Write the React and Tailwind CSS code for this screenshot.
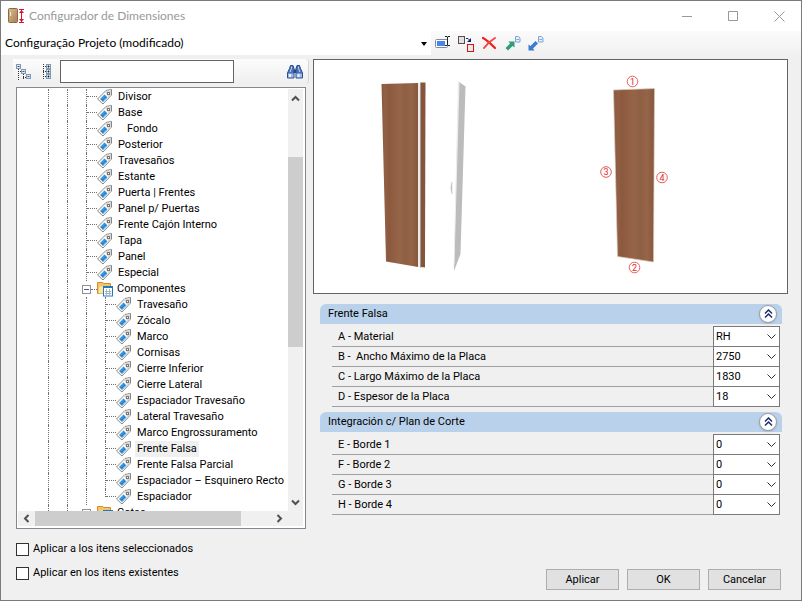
import React from "react";

const pieces = [
  "Divisor",
  "Base",
  "Fondo",
  "Posterior",
  "Travesaños",
  "Estante",
  "Puerta | Frentes",
  "Panel p/ Puertas",
  "Frente Cajón Interno",
  "Tapa",
  "Panel",
  "Especial",
];

const components = [
  "Travesaño",
  "Zócalo",
  "Marco",
  "Cornisas",
  "Cierre Inferior",
  "Cierre Lateral",
  "Espaciador Travesaño",
  "Lateral Travesaño",
  "Marco Engrossuramento",
  "Frente Falsa",
  "Frente Falsa Parcial",
  "Espaciador – Esquinero Recto",
  "Espaciador",
];

const groups = [
  {
    title: "Frente Falsa",
    fields: [
      { id: "a", label: "A - Material", value: "RH" },
      { id: "b", label: "B -  Ancho Máximo de la Placa", value: "2750" },
      { id: "c", label: "C - Largo Máximo de la Placa", value: "1830" },
      { id: "d", label: "D - Espesor de la Placa", value: "18" },
    ],
  },
  {
    title: "Integración c/ Plan de Corte",
    fields: [
      { id: "e", label: "E - Borde 1", value: "0" },
      { id: "f", label: "F - Borde 2", value: "0" },
      { id: "g", label: "G - Borde 3", value: "0" },
      { id: "h", label: "H - Borde 4", value: "0" },
    ],
  },
];

/* ICONS */

function AppIcon() {
  return (
    <svg width="17" height="16" viewBox="0 0 17 16" className="shrink-0">
      <defs>
        <linearGradient id="door" x1="0" y1="0" x2="1" y2="1">
          <stop offset="0" stopColor="#d9bd92" />
          <stop offset="1" stopColor="#a77f52" />
        </linearGradient>
      </defs>
      <rect x="0.5" y="0.5" width="9" height="14" rx="1" fill="url(#door)" stroke="#8a6a45" />
      <path d="M2.500 4v4" stroke="#f6ead4" />
      <path d="M11 1.500h5M11 14.500h5M13.500 2v12" stroke="#d8142c" fill="none" />
      <path d="M11 5l2.500-3L16 5zM11 11l2.500 3 2.500-3z" fill="#d8142c" />
    </svg>
  );
}

function TagIcon() {
  return (
    <svg width="16" height="16" viewBox="0 0 16 16" className="shrink-0">
      <path d="M.5 10 9 1.500 14.500.500V6L6 15z" fill="#fff" stroke="#858585" strokeLinejoin="round" />
      <path d="M8 3 9.500 2l4.500-1v5l-2.500 2.500z" fill="#dadada" />
      <path d="M3 10 7.500 5.500 10.500 8.500 6 13z" fill="#2486d2" />
      <path d="M4.500 10 8 6.500M6.500 11.500 9.500 8.500" stroke="#6db8ee" strokeWidth="0.8" />
      <rect x="10.500" y="3.500" width="2" height="2" fill="#fff" stroke="#777" />
    </svg>
  );
}

function FolderIcon() {
  return (
    <svg width="16" height="16" viewBox="0 0 16 16" className="shrink-0">
      <path d="M.5 12.500V1.500h5l1.500 1h6.500v10z" fill="#f3c366" stroke="#cf8f2c" />
      <path d="M2.500 5.500h11v2h-6v5h-6z" fill="#fde7a8" />
      <rect x="6.500" y="5.500" width="9" height="9.500" fill="#fff" stroke="#2478c0" />
      <path d="M6 6.500h10" stroke="#2478c0" />
      <path d="M9.500 8v6M12.500 8v6M8 10.500h6.500M8 12.500h6.500" stroke="#9cb6cc" />
    </svg>
  );
}

function BoxMark({ x, y, plus }) {
  return (
    <g>
      <rect x={x} y={y} width="4" height="4" fill="#dfe9f3" stroke="#8199b0" />
      <path d={`M${x + 1} ${y + 2}h2`} stroke="#2d5680" />
      {plus && <path d={`M${x + 2} ${y + 1}v2`} stroke="#222" />}
    </g>
  );
}

function CollapseIcon() {
  return (
    <svg width="16" height="16" viewBox="0 0 16 16">
      <path d="M2.500 5v11M2 7.500h4M7.500 10v6M7 13.500h4" stroke="#333" strokeDasharray="1 1" />
      <BoxMark x={0.5} y={0.5} />
      <BoxMark x={5.5} y={5.5} />
      <BoxMark x={10.5} y={10.5} />
    </svg>
  );
}

function ExpandIcon() {
  return (
    <svg width="16" height="16" viewBox="0 0 16 16">
      <path d="M4.500 0v16M4 2.500h4M4 7.500h4M4 12.500h4" stroke="#333" strokeDasharray="1 1" />
      <BoxMark x={7.5} y={0.5} plus />
      <BoxMark x={7.5} y={5.5} plus />
      <BoxMark x={7.5} y={10.5} plus />
    </svg>
  );
}

function BinocularsIcon() {
  return (
    <svg width="16" height="14" viewBox="0 0 16 14">
      <path
        d="M3.500.500h2.500l1 3v9.500H.500V8L2.500 3.500zM12.500.500H10l-1 3v9.500h6.500V8L13.500 3.500z"
        fill="#4a72b8"
        stroke="#2a4c8c"
      />
      <path d="M7 4.500h2V8H7z" fill="#24457f" />
      <path d="M1 8.500h5.500v4H1zM9.500 8.500H15v4H9.500z" fill="#9db9e6" />
      <path d="M2 9h2v3H2zM10.500 9h2v3h-2z" fill="#eaf2ff" />
      <path d="M4.500 1.500v2L3 7M11.500 1.500v2L13 7" stroke="#c6d7f3" fill="none" />
    </svg>
  );
}

function RenameIcon() {
  return (
    <svg width="16" height="16" viewBox="0 0 16 16">
      <rect x="0.5" y="4.500" width="12" height="8" rx="1" fill="#fff" stroke="#7d8ba0" />
      <rect x="2" y="6" width="8" height="5" fill="#4a86e8" />
      <path d="M10 1.500h2l.5.500.5-.500h2M12.500 2v8M10 10.500h2l.5-.500.5.500h2" stroke="#222" fill="none" />
    </svg>
  );
}

function ReplaceIcon() {
  return (
    <svg width="17" height="16" viewBox="0 0 17 16">
      <rect x="0.5" y="0.5" width="6" height="7" fill="#e2e2e2" stroke="#5d4a4a" />
      <path d="M8 2.500h2l2 2" stroke="#12296b" fill="none" />
      <path d="M13 2v4H9z" fill="#12296b" />
      <rect x="9.500" y="8.500" width="6" height="7" fill="#e8e8e8" stroke="#d01515" />
    </svg>
  );
}

function DeleteIcon() {
  return (
    <svg width="15" height="14" viewBox="0 0 15 14">
      <path d="M1 2C5 4 9 8 13 12" fill="none" stroke="#f21d1d" strokeWidth="2.200" strokeLinecap="round" />
      <path d="M13 2C8 5 5 8 2 12" fill="none" stroke="#f54545" strokeWidth="2" strokeLinecap="round" />
    </svg>
  );
}

function PageMark() {
  return (
    <g>
      <path d="M10.500.500h3l1.500 1.500v4h-4.500z" fill="#e6effa" stroke="#7fa5d6" />
      <path d="M11.500 3.500h2.500" stroke="#7fa5d6" />
    </g>
  );
}

function ExportIcon() {
  return (
    <svg width="16" height="15" viewBox="0 0 16 15">
      <PageMark />
      <path d="M3.500 5.500h6v6L7.500 10l-4.500 4.500L.500 12 5 7.500z" fill="#2f9e78" />
    </svg>
  );
}

function ImportIcon() {
  return (
    <svg width="16" height="15" viewBox="0 0 16 15">
      <PageMark />
      <path d="M.500 14.500v-6l2 1.500 5-5L10 7.500l-5 5 1.500 2z" fill="#3c7bd0" />
    </svg>
  );
}

function Chevron({ d, className }) {
  return (
    <svg width="9" height="9" viewBox="0 0 9 9" className={className}>
      <path d={d} fill="none" stroke="currentColor" />
    </svg>
  );
}

/* TREE */

function Guides() {
  return (
    <>
      <span className="h-full w-[19px] shrink-0 border-l border-dotted border-[#707070]" />
      <span className="h-full w-[19px] shrink-0 border-l border-dotted border-[#707070]" />
    </>
  );
}

function Branch({ last }) {
  return (
    <span
      className={`w-[11px] shrink-0 self-start border-l border-dotted border-[#707070] ${
        last ? "h-2" : "h-full"
      }`}
    >
      <span className="block h-2 border-b border-dotted border-[#707070]" />
    </span>
  );
}

function FolderRow({ label }) {
  return (
    <li className="flex h-4 shrink-0 items-center pl-[30px]">
      <Guides />
      <button
        aria-label={`Contraer ${label}`}
        className="-ml-1 flex size-[9px] shrink-0 items-center justify-center border border-[#919191] bg-white"
      >
        <span className="h-px w-[5px] bg-[#3b5b9d]" />
      </button>
      <span className="w-[6px] shrink-0 border-b border-dotted border-[#707070]" />
      <FolderIcon />
      <span className="pl-1">{label}</span>
    </li>
  );
}

function Tree() {
  return (
    <ul className="min-h-0 min-w-0 flex-1 overflow-hidden pt-px whitespace-pre">
      {pieces.map((name) => (
        <li key={name} className="flex h-4 items-center pl-[30px]">
          <Guides />
          <Branch />
          <TagIcon />
          <span className={name === "Fondo" ? "pl-[14px]" : "pl-[5px]"}>{name}</span>
        </li>
      ))}
      <FolderRow label="Componentes" />
      {components.map((name, i) => (
        <li key={name} className="flex h-4 items-center pl-[30px]">
          <Guides />
          <span className="h-full w-[19px] shrink-0 border-l border-dotted border-[#707070]" />
          <Branch last={i === components.length - 1} />
          <TagIcon />
          <span
            className={`ml-[3px] h-4 px-[2px] leading-4 ${
              name === "Frente Falsa" ? "bg-[#f0f0f0]" : ""
            }`}
          >
            {name}
          </span>
        </li>
      ))}
      <FolderRow label="Cotas" />
    </ul>
  );
}

function TreePanel() {
  return (
    <div className="mt-[3px] mr-[3px] ml-[3px] flex min-h-0 flex-1 flex-col border border-[#828790] bg-white pr-[2px] pb-[2px] pl-px">
      <div className="flex min-h-0 flex-1">
        <Tree />
        <div className="mt-px flex w-[15px] flex-col items-center bg-[#f0f0f0] text-[#505050]">
          <Chevron d="M1 6.500 4.500 3 8 6.500" className="my-[5px] shrink-0 stroke-2" />
          <div className="mt-[49px] h-[190px] w-full bg-[#cdcdcd]" />
          <Chevron d="M1 2.500 4.500 6 8 2.500" className="mt-auto mb-1 shrink-0 stroke-2" />
        </div>
      </div>
      <div className="flex h-[15px] items-center bg-[#f0f0f0] text-[#505050]">
        <Chevron d="M6.500 1 3 4.500 6.500 8" className="mx-1 shrink-0 stroke-2" />
        <div className="h-full w-[206px] bg-[#cdcdcd]" />
        <Chevron d="M2.500 1 6 4.500 2.500 8" className="mr-[19px] ml-auto shrink-0 stroke-2" />
      </div>
    </div>
  );
}

/* PREVIEW */

function Marker({ x, y, n }) {
  return (
    <g>
      <circle cx={x} cy={y} r="5.300" fill="#fff" stroke="#ea5a5a" />
      <text x={x} y={y + 3} textAnchor="middle" fontSize="9" fill="#e02828">
        {n}
      </text>
    </g>
  );
}

function Preview() {
  return (
    <div className="h-[235px] border border-[#646464] bg-white">
      <svg viewBox="314 60 473 233" className="size-full" role="img" aria-label="Frente Falsa">
        <defs>
          <linearGradient id="wood">
            <stop offset="0" stopColor="#8b5a3f" />
            <stop offset="0.12" stopColor="#925f43" />
            <stop offset="0.2" stopColor="#8a593e" />
            <stop offset="0.35" stopColor="#925f44" />
            <stop offset="0.5" stopColor="#966549" />
            <stop offset="0.65" stopColor="#8f5f43" />
            <stop offset="0.82" stopColor="#966549" />
            <stop offset="1" stopColor="#87563b" />
          </linearGradient>
        </defs>
        {/* closed front */}
        <path d="M381.500 84 418 83v184l-32-5.500z" fill="url(#wood)" />
        <path d="M418 83l3-.500v185l-3-.500z" fill="#ececec" />
        <path d="M420.500 82.500v185" stroke="#999" />
        <path d="M421 82.500h4.500l-.500 185-4-.500z" fill="#87543a" />
        {/* open door */}
        <path d="M458.500 81.500 465.500 86.500 460.500 254 454 271z" fill="#bcbcbc" />
        <path d="M458 81.500 459.500 82.500 454.500 262 453.500 270z" fill="#ececec" />
        <path d="M452 182q-2.500 6 0 12z" fill="#c4c4c4" stroke="#c4c4c4" strokeWidth="0.500" />
        {/* single panel */}
        <path
          d="M613.500 90 654.500 88.500 653.500 262 617.500 256.500z"
          fill="url(#wood)"
          stroke="#d8c8be"
          strokeWidth="0.700"
        />
        <Marker x={632.5} y={81.5} n="1" />
        <Marker x={634.5} y={267.5} n="2" />
        <Marker x={606} y={172} n="3" />
        <Marker x={662} y={177.5} n="4" />
      </svg>
    </div>
  );
}

/* FIELDS */

function FieldGroup({ title, fields }) {
  return (
    <section className="mr-[6px] ml-[7px]">
      <div className="flex h-5 items-center justify-between rounded-t-md bg-[#b9d1ea] pr-[5px] pl-2">
        <h2>{title}</h2>
        <button
          aria-label={`Contraer ${title}`}
          className="flex size-[18px] items-center justify-center rounded-full border border-[#9a9aa5] bg-white text-[#1c2d6b] shadow-sm"
        >
          <svg width="9" height="10" viewBox="0 0 9 10">
            <path d="M1 4.500 4.500 1 8 4.500M1 8.500 4.500 5 8 8.500" fill="none" stroke="currentColor" strokeWidth="1.500" />
          </svg>
        </button>
      </div>
      <div className="mt-[3px] mr-[2px] ml-3">
        {fields.map((f) => (
          <div key={f.id} className="flex h-5">
            <label
              htmlFor={f.id}
              className="flex-1 border-b border-[#a0a0a0] pl-[6px] leading-5 whitespace-pre"
            >
              {f.label}
            </label>
            <div className="relative -mt-px h-[21px] w-[67px]">
              <select
                id={f.id}
                defaultValue={f.value}
                className="h-full w-full appearance-none border border-[#7a7a7a] bg-white pl-[2px]"
              >
                <option>{f.value}</option>
              </select>
              <Chevron
                d="M.500 2.500 4.500 6.500 8.500 2.500"
                className="pointer-events-none absolute top-[6px] right-1 text-[#333]"
              />
            </div>
          </div>
        ))}
      </div>
    </section>
  );
}

function CheckRow({ id, label }) {
  return (
    <div className="flex h-6 items-center gap-1">
      <input
        id={id}
        type="checkbox"
        className="size-[13px] appearance-none border border-[#333] bg-white checked:bg-[#333]"
      />
      <label htmlFor={id}>{label}</label>
    </div>
  );
}

export default function App() {
  return (
    <div className="flex h-screen flex-col border border-[#7b7b7b] bg-[#f0f0f0] font-['Roboto','Liberation_Sans',sans-serif] text-[11px] leading-4 text-black">
      {/* TITLE BAR */}
      <header className="flex h-[30px] shrink-0 items-center bg-white pr-4 pl-[7px] font-['Lato','Open_Sans',sans-serif] text-[12px] text-[#999]">
        <AppIcon />
        <h1 className="flex-1 pl-1">Configurador de Dimensiones</h1>
        <div className="flex gap-[35px]">
          <button aria-label="Minimizar">
            <svg width="11" height="11" viewBox="0 0 11 11">
              <path d="M0 5.500h10" stroke="currentColor" />
            </svg>
          </button>
          <button aria-label="Maximizar">
            <svg width="11" height="11" viewBox="0 0 11 11">
              <path d="M.500.500h9v9h-9z" fill="none" stroke="currentColor" />
            </svg>
          </button>
          <button aria-label="Cerrar">
            <svg width="11" height="11" viewBox="0 0 11 11">
              <path d="M.500.500l10 10M10.500.500l-10 10" stroke="currentColor" />
            </svg>
          </button>
        </div>
      </header>

      {/* CONFIGURATION BAR */}
      <div className="flex h-7 shrink-0">
        <div className="relative h-6 w-[430px]">
          <select
            aria-label="Configuración"
            className="h-full w-full appearance-none bg-white pl-1 font-['Lato','Open_Sans',sans-serif] text-[12px]"
          >
            <option>Configuração Projeto (modificado)</option>
          </select>
          <svg width="6" height="4" viewBox="0 0 6 4" className="pointer-events-none absolute top-[11px] right-1">
            <path d="M0 0h6L3 4z" />
          </svg>
        </div>
        <div className="flex flex-1 gap-[7px] bg-linear-to-b from-[#fbfbfb] to-[#efefef] pt-1 pl-1">
          <button aria-label="Renombrar" className="size-4"><RenameIcon /></button>
          <button aria-label="Reemplazar" className="size-[17px]"><ReplaceIcon /></button>
          <button aria-label="Eliminar" className="size-4"><DeleteIcon /></button>
          <button aria-label="Exportar" className="size-4"><ExportIcon /></button>
          <button aria-label="Importar" className="size-4"><ImportIcon /></button>
        </div>
      </div>

      <main className="flex min-h-0 flex-1 pr-[13px] pl-3">
        {/* LEFT: TREE */}
        <div className="flex w-[296px] shrink-0 flex-col">
          <div className="flex h-[25px] shrink-0 items-center rounded-r-sm border-r border-[#d5d5d5] bg-linear-to-b from-[#fcfcfc] to-[#efefef] pr-[5px] pl-[3px]">
            <button aria-label="Contraer todo"><CollapseIcon /></button>
            <button aria-label="Expandir todo" className="ml-[7px]"><ExpandIcon /></button>
            <input
              type="text"
              aria-label="Buscar"
              className="ml-[5px] h-[23px] w-[174px] border border-[#646464] bg-white px-1"
            />
            <button aria-label="Buscar siguiente" className="ml-auto"><BinocularsIcon /></button>
          </div>
          <TreePanel />
          <div className="mt-2 mb-[15px] ml-[3px] shrink-0">
            <CheckRow id="selected" label="Aplicar a los itens seleccionados" />
            <CheckRow id="existing" label="Aplicar en los itens existentes" />
          </div>
        </div>

        {/* RIGHT: PREVIEW AND FIELDS */}
        <div className="ml-1 flex min-w-0 flex-1 flex-col">
          <Preview />
          <div className="mt-[10px] flex flex-col gap-[5px]">
            {groups.map((g) => (
              <FieldGroup key={g.title} {...g} />
            ))}
          </div>
          <div className="mt-auto mr-[7px] mb-[10px] flex justify-end gap-2">
            {["Aplicar", "OK", "Cancelar"].map((name) => (
              <button key={name} className="h-[21px] w-[73px] border border-[#adadad] bg-[#e1e1e1]">
                {name}
              </button>
            ))}
          </div>
        </div>
      </main>
    </div>
  );
}
